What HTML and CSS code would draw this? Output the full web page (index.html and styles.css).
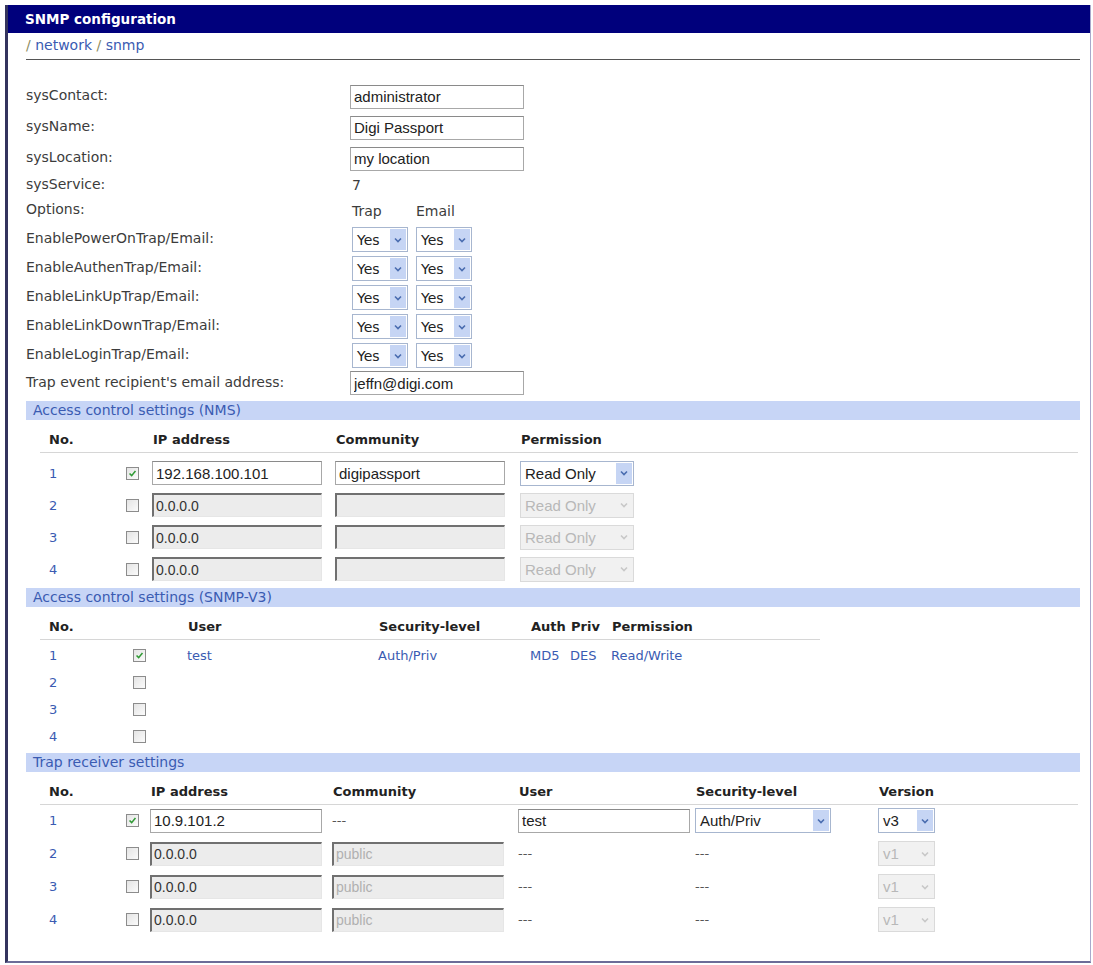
FILE: index.html
```html
<!DOCTYPE html>
<html>

<head>
  <meta charset="UTF-8">
  <title>SNMP configuration</title>
  <link rel="stylesheet" href="styles.css">
</head>

<body>
  <div id="panel">
    <h1>SNMP configuration</h1>

    <div id="content">
      <div id="crumb">
        <span class="slash">/</span> <a href="#">network</a>
        <span class="slash">/</span> <a href="#">snmp</a>
      </div>

      <!-- system settings -->
      <div id="system">
        <label>sysContact:</label>
        <div><input class="text" value="administrator"></div>

        <label>sysName:</label>
        <div><input class="text" value="Digi Passport"></div>

        <label>sysLocation:</label>
        <div><input class="text" value="my location"></div>

        <label>sysService:</label>
        <div class="plain">7</div>

        <label>Options:</label>
        <div class="pair plain"><span>Trap</span><span>Email</span></div>

        <label>EnablePowerOnTrap/Email:</label>
        <div class="pair">
          <span class="sel yes"><span class="val">Yes</span><span class="btn"><svg viewBox="0 0 8 6"><path d="M1 1.5 4 4.5 7 1.5" /></svg></span></span>
          <span class="sel yes"><span class="val">Yes</span><span class="btn"><svg viewBox="0 0 8 6"><path d="M1 1.5 4 4.5 7 1.5" /></svg></span></span>
        </div>

        <label>EnableAuthenTrap/Email:</label>
        <div class="pair">
          <span class="sel yes"><span class="val">Yes</span><span class="btn"><svg viewBox="0 0 8 6"><path d="M1 1.5 4 4.5 7 1.5" /></svg></span></span>
          <span class="sel yes"><span class="val">Yes</span><span class="btn"><svg viewBox="0 0 8 6"><path d="M1 1.5 4 4.5 7 1.5" /></svg></span></span>
        </div>

        <label>EnableLinkUpTrap/Email:</label>
        <div class="pair">
          <span class="sel yes"><span class="val">Yes</span><span class="btn"><svg viewBox="0 0 8 6"><path d="M1 1.5 4 4.5 7 1.5" /></svg></span></span>
          <span class="sel yes"><span class="val">Yes</span><span class="btn"><svg viewBox="0 0 8 6"><path d="M1 1.5 4 4.5 7 1.5" /></svg></span></span>
        </div>

        <label>EnableLinkDownTrap/Email:</label>
        <div class="pair">
          <span class="sel yes"><span class="val">Yes</span><span class="btn"><svg viewBox="0 0 8 6"><path d="M1 1.5 4 4.5 7 1.5" /></svg></span></span>
          <span class="sel yes"><span class="val">Yes</span><span class="btn"><svg viewBox="0 0 8 6"><path d="M1 1.5 4 4.5 7 1.5" /></svg></span></span>
        </div>

        <label>EnableLoginTrap/Email:</label>
        <div class="pair">
          <span class="sel yes"><span class="val">Yes</span><span class="btn"><svg viewBox="0 0 8 6"><path d="M1 1.5 4 4.5 7 1.5" /></svg></span></span>
          <span class="sel yes"><span class="val">Yes</span><span class="btn"><svg viewBox="0 0 8 6"><path d="M1 1.5 4 4.5 7 1.5" /></svg></span></span>
        </div>

        <label>Trap event recipient's email address:</label>
        <div><input class="text" value="jeffn@digi.com"></div>
      </div>

      <!-- NMS -->
      <div class="section">Access control settings (NMS)</div>
      <table class="grid nms">
        <colgroup>
          <col style="width: 80px"><col style="width: 30px"><col style="width: 183px"><col style="width: 185px"><col>
        </colgroup>
        <thead>
          <tr><th>No.</th><th></th><th>IP address</th><th>Community</th><th>Permission</th></tr>
        </thead>
        <tbody>
          <tr>
            <td class="no">1</td>
            <td><span class="check on"><svg viewBox="0 0 13 13"><path d="M3 6.5 5.5 9 10 3.5" /></svg></span></td>
            <td><input class="text" value="192.168.100.101"></td>
            <td><input class="text" value="digipassport"></td>
            <td><span class="sel perm"><span class="val">Read Only</span><span class="btn"><svg viewBox="0 0 8 6"><path d="M1 1.5 4 4.5 7 1.5" /></svg></span></span></td>
          </tr>
          <tr>
            <td class="no">2</td>
            <td><span class="check"></span></td>
            <td><input class="text" value="0.0.0.0" disabled></td>
            <td><input class="text" value="" disabled></td>
            <td><span class="sel perm off"><span class="val">Read Only</span><span class="btn"><svg viewBox="0 0 8 6"><path d="M1 1.5 4 4.5 7 1.5" /></svg></span></span></td>
          </tr>
          <tr>
            <td class="no">3</td>
            <td><span class="check"></span></td>
            <td><input class="text" value="0.0.0.0" disabled></td>
            <td><input class="text" value="" disabled></td>
            <td><span class="sel perm off"><span class="val">Read Only</span><span class="btn"><svg viewBox="0 0 8 6"><path d="M1 1.5 4 4.5 7 1.5" /></svg></span></span></td>
          </tr>
          <tr>
            <td class="no">4</td>
            <td><span class="check"></span></td>
            <td><input class="text" value="0.0.0.0" disabled></td>
            <td><input class="text" value="" disabled></td>
            <td><span class="sel perm off"><span class="val">Read Only</span><span class="btn"><svg viewBox="0 0 8 6"><path d="M1 1.5 4 4.5 7 1.5" /></svg></span></span></td>
          </tr>
        </tbody>
      </table>

      <!-- SNMP-V3 -->
      <div class="section">Access control settings (SNMP-V3)</div>
      <table class="grid v3">
        <colgroup>
          <col style="width: 90px"><col style="width: 55px"><col style="width: 191px"><col style="width: 152px"><col style="width: 40px"><col style="width: 41px"><col>
        </colgroup>
        <thead>
          <tr><th>No.</th><th></th><th>User</th><th>Security-level</th><th>Auth</th><th>Priv</th><th>Permission</th></tr>
        </thead>
        <tbody>
          <tr>
            <td class="no">1</td>
            <td><span class="check on"><svg viewBox="0 0 13 13"><path d="M3 6.5 5.5 9 10 3.5" /></svg></span></td>
            <td class="link">test</td>
            <td class="link">Auth/Priv</td>
            <td class="link">MD5</td>
            <td class="link">DES</td>
            <td class="link">Read/Write</td>
          </tr>
          <tr><td class="no">2</td><td><span class="check"></span></td><td></td><td></td><td></td><td></td><td></td></tr>
          <tr><td class="no">3</td><td><span class="check"></span></td><td></td><td></td><td></td><td></td><td></td></tr>
          <tr><td class="no">4</td><td><span class="check"></span></td><td></td><td></td><td></td><td></td><td></td></tr>
        </tbody>
      </table>

      <!-- trap receivers -->
      <div class="section">Trap receiver settings</div>
      <table class="grid trap">
        <colgroup>
          <col style="width: 80px"><col style="width: 28px"><col style="width: 182px"><col style="width: 186px"><col style="width: 177px"><col style="width: 183px"><col>
        </colgroup>
        <thead>
          <tr><th>No.</th><th></th><th>IP address</th><th>Community</th><th>User</th><th>Security-level</th><th>Version</th></tr>
        </thead>
        <tbody>
          <tr>
            <td class="no">1</td>
            <td><span class="check on"><svg viewBox="0 0 13 13"><path d="M3 6.5 5.5 9 10 3.5" /></svg></span></td>
            <td><input class="text" value="10.9.101.2"></td>
            <td class="dash">---</td>
            <td><input class="text" value="test"></td>
            <td><span class="sel level"><span class="val">Auth/Priv</span><span class="btn"><svg viewBox="0 0 8 6"><path d="M1 1.5 4 4.5 7 1.5" /></svg></span></span></td>
            <td><span class="sel ver"><span class="val">v3</span><span class="btn"><svg viewBox="0 0 8 6"><path d="M1 1.5 4 4.5 7 1.5" /></svg></span></span></td>
          </tr>
          <tr>
            <td class="no">2</td>
            <td><span class="check"></span></td>
            <td><input class="text" value="0.0.0.0" disabled></td>
            <td><input class="text dim" value="public" disabled></td>
            <td class="dash">---</td>
            <td class="dash">---</td>
            <td><span class="sel ver off"><span class="val">v1</span><span class="btn"><svg viewBox="0 0 8 6"><path d="M1 1.5 4 4.5 7 1.5" /></svg></span></span></td>
          </tr>
          <tr>
            <td class="no">3</td>
            <td><span class="check"></span></td>
            <td><input class="text" value="0.0.0.0" disabled></td>
            <td><input class="text dim" value="public" disabled></td>
            <td class="dash">---</td>
            <td class="dash">---</td>
            <td><span class="sel ver off"><span class="val">v1</span><span class="btn"><svg viewBox="0 0 8 6"><path d="M1 1.5 4 4.5 7 1.5" /></svg></span></span></td>
          </tr>
          <tr>
            <td class="no">4</td>
            <td><span class="check"></span></td>
            <td><input class="text" value="0.0.0.0" disabled></td>
            <td><input class="text dim" value="public" disabled></td>
            <td class="dash">---</td>
            <td class="dash">---</td>
            <td><span class="sel ver off"><span class="val">v1</span><span class="btn"><svg viewBox="0 0 8 6"><path d="M1 1.5 4 4.5 7 1.5" /></svg></span></span></td>
          </tr>
        </tbody>
      </table>
    </div>
  </div>
</body>

</html>
```

FILE: styles.css
```css
:root {
  --color-title: #00007c;
  --color-text: #3c3c3c;
  --color-link: #3a5bb2;
  --color-band: #c7d5f6;
  --color-line: #d6d6d6;
}

* {
  margin: 0;
  padding: 0;
  box-sizing: border-box;
}

body {
  background: #fff;
  font-family: "DejaVu Sans", Verdana, sans-serif;
  font-size: 13px;
  color: var(--color-text);
}

#panel {
  margin: 5px 2px 0 5px;
  height: 958px;
  border-left: 3px solid #34345e;
  border-right: 1px solid #a9a9cc;
  border-bottom: 2px solid #6c6c98;
}

h1 {
  height: 28px;
  padding-left: 17px;
  background: var(--color-title);
  color: #fff;
  font-size: 13.5px;
  font-weight: bold;
  line-height: 28px;
}

#content {
  padding: 0 10px 0 18px;
}

#crumb {
  height: 27px;
  padding-top: 3px;
  border-bottom: 1px solid #555;
  font-size: 14px;
  line-height: 18px;

  a {
    color: var(--color-link);
    text-decoration: none;
  }

  .slash {
    color: #8c8c60;
  }
}

/* system settings */

#system {
  margin-top: 21px;
  font-size: 14px;

  display: grid;
  grid-template-columns: 324px 1fr;
  grid-template-rows: 31px 31px 31px 22px 29px 29px 29px 29px 29px 29px 26px;

  label,
  div {
    align-self: center;
  }

  label {
    padding-bottom: 3px;
  }

  .plain {
    padding-left: 2px;
  }

  .pair {
    display: flex;
    gap: 8px;
    padding-left: 2px;
  }

  .pair.plain span:first-child {
    width: 56px;
  }

  input.text {
    width: 174px;
  }
}

input.text {
  height: 24px;
  padding: 0 3px;
  border: 1px solid #a8a8a8;
  border-top-color: #8a8a8a;
  background: #fff;
  font-family: "Liberation Sans", Arial, sans-serif;
  font-size: 15px;
  color: #222;
}

input.text:disabled {
  padding-left: 2px;
  border: 1px solid #e6e6e6;
  border-top: 2px solid #707070;
  border-left: 2px solid #707070;
  background: #ececec;
  font-size: 14px;
  color: #333;
}

input.text.dim:disabled {
  color: #b0b0b0;
}

/* fake select boxes */

.sel {
  height: 25px;
  padding-left: 4px;
  border: 1px solid #a7b6cf;
  background: #fff;
  font-family: "Liberation Sans", Arial, sans-serif;
  font-size: 15px;
  color: #222;

  display: inline-flex;
  align-items: center;

  .val {
    flex: 1;
    white-space: nowrap;
  }

  .btn {
    width: 16px;
    height: 21px;
    margin-right: 1px;
    background: #c6d5f4;

    display: flex;
    align-items: center;
    justify-content: center;
  }

  svg {
    width: 8px;
    height: 6px;
    fill: none;
    stroke: #4a6db0;
    stroke-width: 1.6;
  }
}

.sel.yes {
  width: 56px;
  font-family: "DejaVu Sans", Verdana, sans-serif;
  font-size: 14px;
}

.sel.perm {
  width: 114px;
}

.sel.level {
  width: 136px;
}

.sel.ver {
  width: 57px;
}

.sel.off {
  border-color: #dadada;
  background: #f1f1f1;
  color: #b8b8b8;

  .btn {
    background: #f1f1f1;
  }

  svg {
    stroke: #c8c8c8;
  }
}

/* checkboxes */

.check {
  display: block;
  width: 13px;
  height: 13px;
  border: 1px solid #8c8c8c;
  background: linear-gradient(135deg, #e4e4e4, #fbfbfb);

  svg {
    display: block;
    width: 11px;
    height: 11px;
    fill: none;
    stroke: #2f9a34;
    stroke-width: 1.8;
  }
}

/* sections and tables */

.section {
  height: 19px;
  padding-left: 7px;
  background: var(--color-band);
  color: var(--color-link);
  font-size: 14px;
  line-height: 19px;
}

#system + .section {
  margin-top: 5px;
}

table + .section {
  margin-top: 3px;
}

table.grid {
  margin: 7px 0 0 14px;
  border-collapse: collapse;
  table-layout: fixed;

  th {
    height: 25px;
    padding-left: 3px;
    border-bottom: 1px solid var(--color-line);
    color: #222;
    font-weight: bold;
    text-align: left;
    vertical-align: middle;
  }

  td {
    padding-left: 2px;
    vertical-align: middle;
  }

  th:first-child,
  td.no {
    padding-left: 9px;
  }

  td.no,
  td.link {
    color: var(--color-link);
  }

  td.dash {
    color: #555;
  }
}

table.nms {
  width: 1038px;

  tbody tr {
    height: 32px;
  }

  tbody tr:first-child {
    height: 37px;
  }

  tbody tr:first-child td {
    padding-top: 5px;
  }

  td:nth-child(2) {
    padding-left: 6px;
  }

  input.text {
    width: 170px;
  }
}

table.v3 {
  width: 780px;

  tbody tr {
    height: 27px;
  }

  tbody tr:first-child {
    height: 30px;
  }

  tbody tr:first-child td {
    padding-top: 3px;
  }

  td:nth-child(2) {
    padding-left: 3px;
  }
}

table.trap {
  width: 1038px;

  tbody tr {
    height: 33px;
  }

  td:nth-child(2) {
    padding-left: 6px;
  }

  input.text {
    width: 172px;
  }
}
```
